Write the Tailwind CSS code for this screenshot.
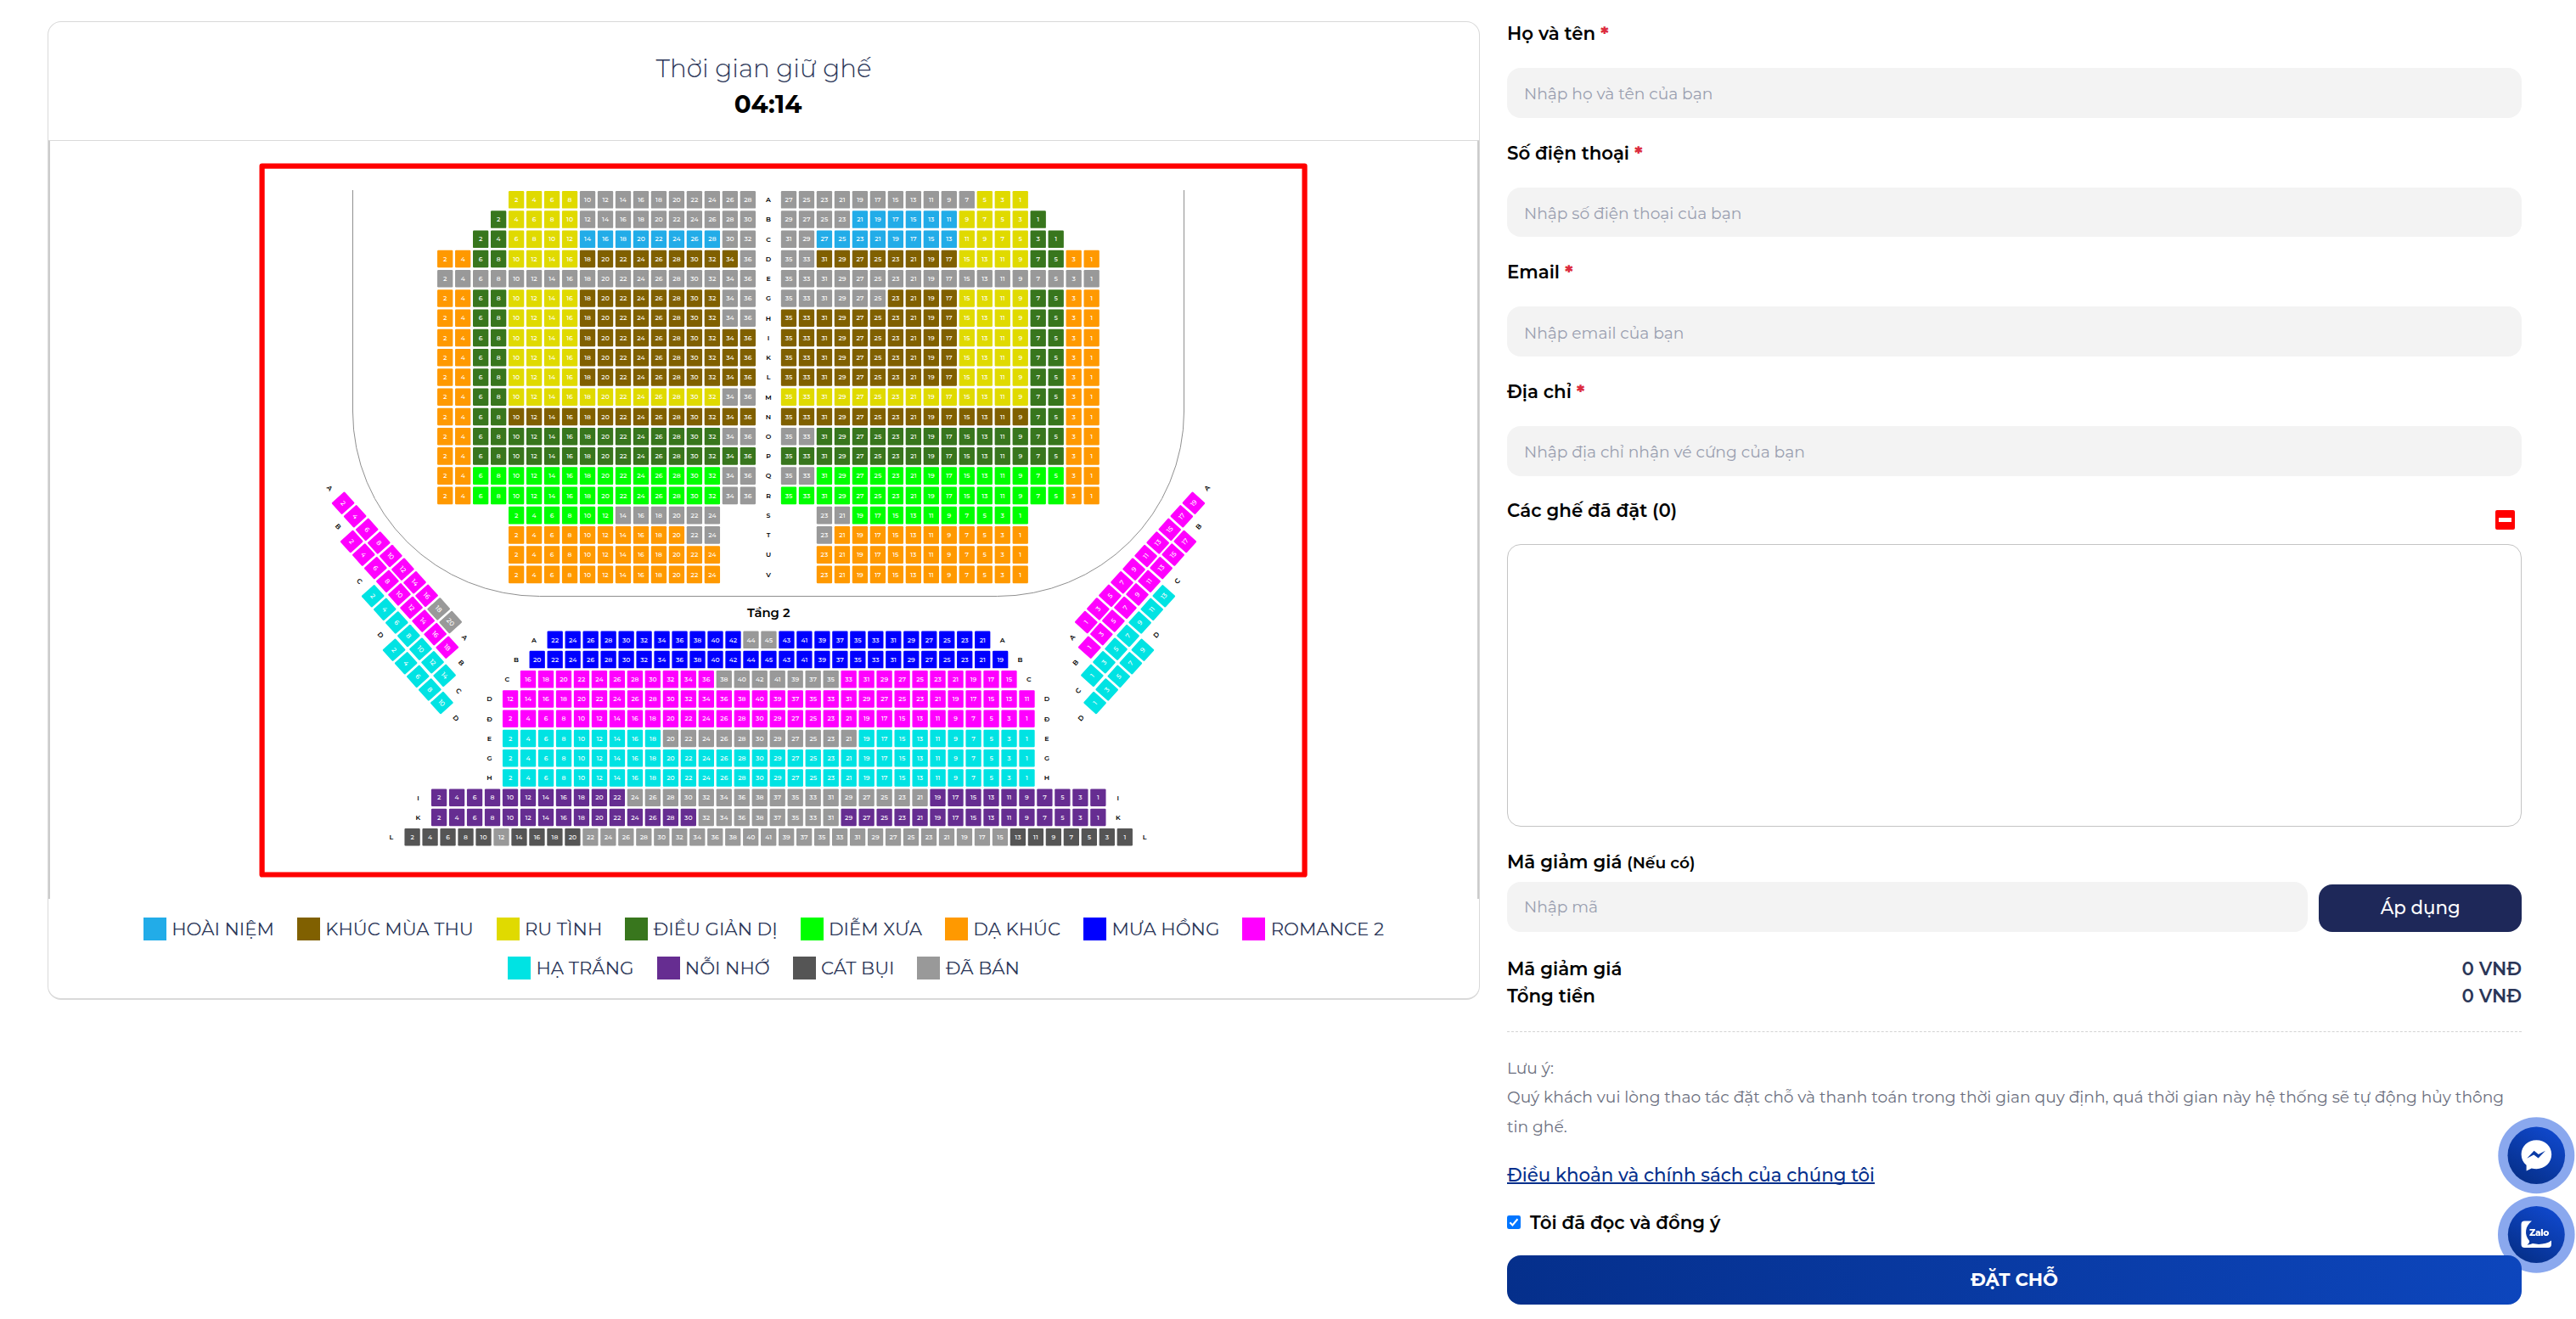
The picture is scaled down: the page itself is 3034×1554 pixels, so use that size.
<!DOCTYPE html>
<html lang="vi">
<head>
    <meta charset="utf-8">
    <title>Đặt chỗ</title>
    <script src="https://cdn.jsdelivr.net/npm/@tailwindcss/browser@4"></script>
</head>
<body class="bg-white font-['Montserrat','Inter',sans-serif] text-[21.33px] text-[#2b3658] overflow-hidden">
    <div class="flex items-start pl-14 pr-16">
        <!-- Seat map card -->
        <div class="mt-[25px] w-[1687px] h-[1153px] shrink-0 rounded-2xl border border-b-2 border-[#d9d9d9] overflow-hidden">
            <div class="h-[140px] border-b border-[#d9d9d9] pt-[33.5px] text-center text-[29.33px] leading-[42px]">
                <p class="font-light">Thời gian giữ ghế</p>
                <p class="pl-[10px] font-bold text-black">04:14</p>
            </div>
            <div class="h-[893px] border-x-2 border-[#cccccc]">
                <svg id="seatMap" class="block w-[1681px] h-[893px]" viewBox="59 166 1681 893"></svg>
            </div>
            <div id="legend" class="flex flex-wrap justify-center gap-x-[27px] gap-y-[18.6px] px-10 pt-[22px]"></div>
        </div>

        <!-- Booking form -->
        <form class="ml-8 pt-6 w-[1195px] shrink-0">
            <div class="h-[140.67px]">
                <label class="block font-semibold text-black leading-[30px]">Họ và tên <span class="font-extrabold text-[#dc2c3e]">*</span></label>
                <input type="text" placeholder="Nhập họ và tên của bạn" class="mt-[26px] w-full h-[58.67px] rounded-2xl bg-[#f3f3f3] px-5 pt-[3px] text-[18.67px] placeholder:text-[#9a9fb0]">
            </div>
            <div class="h-[140.67px]">
                <label class="block font-semibold text-black leading-[30px]">Số điện thoại <span class="font-extrabold text-[#dc2c3e]">*</span></label>
                <input type="text" placeholder="Nhập số điện thoại của bạn" class="mt-[26px] w-full h-[58.67px] rounded-2xl bg-[#f3f3f3] px-5 pt-[3px] text-[18.67px] placeholder:text-[#9a9fb0]">
            </div>
            <div class="h-[140.67px]">
                <label class="block font-semibold text-black leading-[30px]">Email <span class="font-extrabold text-[#dc2c3e]">*</span></label>
                <input type="text" placeholder="Nhập email của bạn" class="mt-[26px] w-full h-[58.67px] rounded-2xl bg-[#f3f3f3] px-5 pt-[3px] text-[18.67px] placeholder:text-[#9a9fb0]">
            </div>
            <div class="h-[140.67px]">
                <label class="block font-semibold text-black leading-[30px]">Địa chỉ <span class="font-extrabold text-[#dc2c3e]">*</span></label>
                <input type="text" placeholder="Nhập địa chỉ nhận vé cứng của bạn" class="mt-[26px] w-full h-[58.67px] rounded-2xl bg-[#f3f3f3] px-5 pt-[3px] text-[18.67px] placeholder:text-[#9a9fb0]">
            </div>

            <div class="flex justify-between h-[54.7px]">
                <label class="font-semibold text-black leading-[29px]">Các ghế đã đặt (0)</label>
                <button type="button" class="mt-[14.3px] mr-[7.7px] flex size-[23.5px] items-center justify-center rounded-[2px] bg-[#ff0000]">
                    <span class="h-[4.5px] w-[15px] bg-white"></span>
                </button>
            </div>
            <div class="h-[332.6px] rounded-2xl border border-[#c4c4c4]"></div>

            <!-- Discount code -->
            <label class="mt-[25.8px] block h-[30px] font-semibold text-black leading-[30px]">Mã giảm giá <span class="text-[18.67px]">(Nếu có)</span></label>
            <div class="mt-[9.6px] flex items-end justify-between">
                <input type="text" placeholder="Nhập mã" class="w-[943px] h-[58.67px] rounded-2xl bg-[#f3f3f3] px-5 text-[18.67px] placeholder:text-[#9a9fb0]">
                <button type="button" class="w-[238.6px] h-[56px] rounded-2xl bg-[#1e2859] text-white font-medium">Áp dụng</button>
            </div>

            <div class="mt-[26.6px] flex justify-between font-semibold leading-8">
                <span class="text-black">Mã giảm giá</span><span>0 VNĐ</span>
            </div>
            <div class="flex justify-between font-semibold leading-8">
                <span class="text-black">Tổng tiền</span><span>0 VNĐ</span>
            </div>
            <div class="mt-[26px] border-t border-dashed border-[#d4d4d4]"></div>

            <div class="mt-[26px] text-[18.67px] leading-[34.8px] text-[#6c7080]">
                <p>Lưu ý:</p>
                <p>Quý khách vui lòng thao tác đặt chỗ và thanh toán trong thời gian quy định, quá thời gian này hệ thống sẽ tự động hủy thông tin ghế.</p>
            </div>
            <a href="#" class="mt-[23.4px] block w-fit font-medium leading-[30px] text-[#052f8c] underline [text-decoration-skip-ink:none] decoration-[1.5px]">Điều khoản và chính sách của chúng tôi</a>
            <label class="mt-[25.5px] flex items-center font-semibold text-black leading-[30px]">
                <svg class="mr-[11px] size-[16px]" viewBox="0 0 17 17"><rect width="17" height="17" rx="2.5" fill="#0075ff"/><path d="M3.6 8.8l3.2 3.3 6.4-7.6" fill="none" stroke="#fff" stroke-width="2.2"/></svg>
                Tôi đã đọc và đồng ý
            </label>
            <button type="button" class="relative z-10 mt-[24.3px] w-full h-[58px] rounded-2xl bg-[linear-gradient(75deg,#052f8b,#0d46bd)] text-white font-bold">ĐẶT CHỖ</button>
        </form>
    </div>

    <!-- Floating chat buttons -->
    <svg class="fixed right-0 top-[1312px] w-[96px] h-[192px]" viewBox="0 0 96 192">
        <defs>
            <linearGradient id="blue" x1="0.2" y1="1" x2="0.8" y2="0">
                <stop offset="0" stop-color="#052e86"/>
                <stop offset="1" stop-color="#1049cf"/>
            </linearGradient>
        </defs>
        <!-- Messenger -->
        <circle cx="49.3" cy="49.3" r="45" fill="#8aa8ee"/>
        <circle cx="49.3" cy="49.3" r="33.8" fill="url(#blue)"/>
        <path d="M49.4 31.3c-10 0-17.8 7.1-17.8 16.8 0 5.2 2.2 9.6 6 12.7v6.6l6-2.9c1.8.5 3.8.7 5.8.7 10 0 17.8-7.3 17.8-17.1s-7.8-16.8-17.8-16.8z" fill="#fff"/>
        <path d="M38.2 52.8l8.4-9 5.2 4.2 8.2-4.3-8.4 8.9-5.3-4.2z" fill="#0a3ba6"/>
        <!-- Zalo -->
        <circle cx="49.3" cy="142.5" r="45.3" fill="#8aa8ee"/>
        <circle cx="49.3" cy="142.5" r="33.5" fill="url(#blue)"/>
        <path d="M44 126.500h-8.500q-4 0-4 4v23.500q0 4 4 4h27.500q4 0 4-4v-4.500c-5 4-14 5.500-22 3.600-2.600 1.200-4.500 1.600-6.600 1.300 2-1.300 2.900-2.700 2.700-4.500-6.500-7.200-5-17.500 2.900-23.400z" fill="#fff"/>
        <text x="52.7" y="143.5" text-anchor="middle" font-family="Montserrat, sans-serif" font-weight="800" font-size="10.7" textLength="23.5" fill="#fff">Zalo</text>
    </svg>

    <script>
        const COLORS = {
            b: '#22ace8', k: '#806000', y: '#e0da00', g: '#38761d', l: '#00ff00', o: '#ff9900',
            m: '#0000ff', r: '#ff00ff', c: '#00e3e3', p: '#662d91', d: '#555555', x: '#999999'
        };
        const LEGEND = [
            ['b', 'HOÀI NIỆM'], ['k', 'KHÚC MÙA THU'], ['y', 'RU TÌNH'], ['g', 'ĐIỀU GIẢN DỊ'],
            ['l', 'DIỄM XƯA'], ['o', 'DẠ KHÚC'], ['m', 'MƯA HỒNG'], ['r', 'ROMANCE 2'],
            ['c', 'HẠ TRẮNG'], ['p', 'NỖI NHỚ'], ['d', 'CÁT BỤI'], ['x', 'ĐÃ BÁN']
        ];

        document.getElementById('legend').innerHTML = LEGEND.map(([c, name]) => `
            <div class="flex items-center h-[27px] leading-[27px]">
                <span class="size-[27px] mr-[6.3px]" style="background:${COLORS[c]}"></span>${name}
            </div>
        `).join('');

        const PITCH = 20.98, ROW = 23.24, W = 18.3, H = 20.6;
        let svg = '';

        // "y4 x10" -> "yyyyxxxxxxxxxx"
        const expand = runs => runs.split(' ').map(r => r[0].repeat(+r.slice(1))).join('');

        // seat centred on (cx, cy)
        function seat(cx, cy, color, n, rot = 0) {
            svg += `<g transform="translate(${cx.toFixed(2)} ${cy.toFixed(2)}) rotate(${rot})">
                <rect x="${-W / 2}" y="${-H / 2}" width="${W}" height="${H}" rx="1.2" fill="${COLORS[color]}"/>
                <text y="2.7" font-size="7.6" font-weight="500" fill="#fff">${n}</text></g>`;
        }
        function letter(cx, cy, t, rot = 0) {
            svg += `<text transform="translate(${cx.toFixed(2)} ${cy.toFixed(2)}) rotate(${rot})" y="2.8" font-size="7.8" font-weight="600" fill="#000">${t}</text>`;
        }

        // Floor 1: name, left start column, left seats, right start column, right seats
        const FLOOR1 = [
            ['A', 4, 'y4 x10', 0, 'x11 y3'],
            ['B', 3, 'g1 y4 x10', 0, 'x4 b6 y4 g1'],
            ['C', 2, 'g2 y4 b8 x2', 0, 'x2 b8 y4 g2'],
            ['D', 0, 'o2 g2 y4 k9 x1', 0, 'x2 k8 y4 g2 o2'],
            ['E', 0, 'x18', 0, 'x18'],
            ['G', 0, 'o2 g2 y4 k8 x2', 0, 'x6 k4 y4 g2 o2'],
            ['H', 0, 'o2 g2 y4 k8 x2', 0, 'k10 y4 g2 o2'],
            ['I', 0, 'o2 g2 y4 k10', 0, 'k10 y4 g2 o2'],
            ['K', 0, 'o2 g2 y4 k10', 0, 'k10 y4 g2 o2'],
            ['L', 0, 'o2 g2 y4 k10', 0, 'k10 y4 g2 o2'],
            ['M', 0, 'o2 g2 y12 x2', 0, 'y14 g2 o2'],
            ['N', 0, 'o2 g2 k14', 0, 'k14 g2 o2'],
            ['O', 0, 'o2 g14 x2', 0, 'x2 g14 o2'],
            ['P', 0, 'o2 g16', 0, 'g16 o2'],
            ['Q', 0, 'o2 l14 x2', 0, 'x2 l14 o2'],
            ['R', 0, 'o2 l14 x2', 0, 'l16 o2'],
            ['S', 4, 'l6 x6', 2, 'x2 l10'],
            ['T', 4, 'o10 x2', 2, 'x1 o11'],
            ['U', 4, 'o12', 2, 'o12'],
            ['V', 4, 'o12', 2, 'o12']
        ];
        FLOOR1.forEach(([name, lc, left, rc, right], i) => {
            const cy = 235.3 + i * ROW;
            const l = expand(left), r = expand(right);
            [...l].forEach((c, j) => seat(524.2 + (lc + j) * PITCH, cy, c, 2 + j * 2));
            [...r].forEach((c, j) => seat(929 + (rc + j) * PITCH, cy, c, (r.length - j) * 2 - 1));
            letter(905, cy, name);
        });

        // Floor 2: name, x of the first seat, first number, even seats, last number, odd seats
        const FLOOR2 = [
            ['A', 653.7, 22, 'm11 x1', 21, 'x1 m12'],
            ['B', 632.7, 20, 'm13', 19, 'm14'],
            ['C', 622, 16, 'r11 x3', 15, 'x4 r10'],
            ['D', 601.1, 12, 'r15', 11, 'r15'],
            ['Đ', 601.1, 2, 'r15', 1, 'r15'],
            ['E', 601.1, 2, 'c9 x6', 1, 'x5 c10'],
            ['G', 601.1, 2, 'c15', 1, 'c15'],
            ['H', 601.1, 2, 'c15', 1, 'c15'],
            ['I', 517.1, 2, 'p11 x8', 1, 'x9 p10'],
            ['K', 517.1, 2, 'p15 x4', 1, 'x4 p15'],
            ['L', 485.6, 2, 'd5 x1 d4 x10', 1, 'x14 d7']
        ];
        FLOOR2.forEach(([name, x, first, even, last, odd], i) => {
            const cy = 753.8 + i * ROW;
            const l = expand(even), r = expand(odd);
            [...l].forEach((c, j) => seat(x + j * PITCH, cy, c, first + j * 2));
            [...r].forEach((c, j) => seat(x + (l.length + j) * PITCH, cy, c, last + (r.length - 1 - j) * 2));
            letter(x - 24.7, cy, name);
            letter(x + (l.length + r.length) * PITCH + 2.4, cy, name);
        });

        // Side balconies, the right one is mirrored about x = 905
        const SIDES = [
            ['A', 404.1, 592.7, 'r8 x2', 'r10'],
            ['B', 414.2, 638, 'r9', 'r9'],
            ['C', 439.2, 702.3, 'c7', 'c7'],
            ['D', 464.1, 765.7, 'c5', 'c5']
        ];
        SIDES.forEach(([name, x, y, left, right]) => {
            const l = expand(left), r = expand(right);
            const ex = x + (l.length - 1) * 14.07, ey = y + (l.length - 1) * 15.59;
            [...l].forEach((c, j) => seat(x + j * 14.07, y + j * 15.59, c, 2 + j * 2, 48));
            [...r].forEach((c, j) => seat(1810 - x - j * 14.07, y + j * 15.59, c, (r.length - j) * 2 - 1, -48));
            letter(x - 15.8, y - 17.7, name, 48);
            letter(ex + 16.5, ey + 18, name, 48);
            letter(1810 - x + 15.8, y - 17.7, name, -48);
            letter(1810 - ex - 16.5, ey + 18, name, -48);
        });

        document.getElementById('seatMap').innerHTML = `
            <rect x="308.6" y="195.7" width="1228" height="834.8" fill="none" stroke="#ff0000" stroke-width="6.2" stroke-linejoin="round"/>
            <path d="M415.5 224V485A220 217.5 0 0 0 635.5 702.5H1174.5A220 217.5 0 0 0 1394.5 485V224" fill="none" stroke="#8f8f8f"/>
            <g text-anchor="middle">${svg}<text x="905.3" y="727" font-size="14.8" font-weight="600" fill="#000">Tầng 2</text></g>`;
    </script>
</body>
</html>
